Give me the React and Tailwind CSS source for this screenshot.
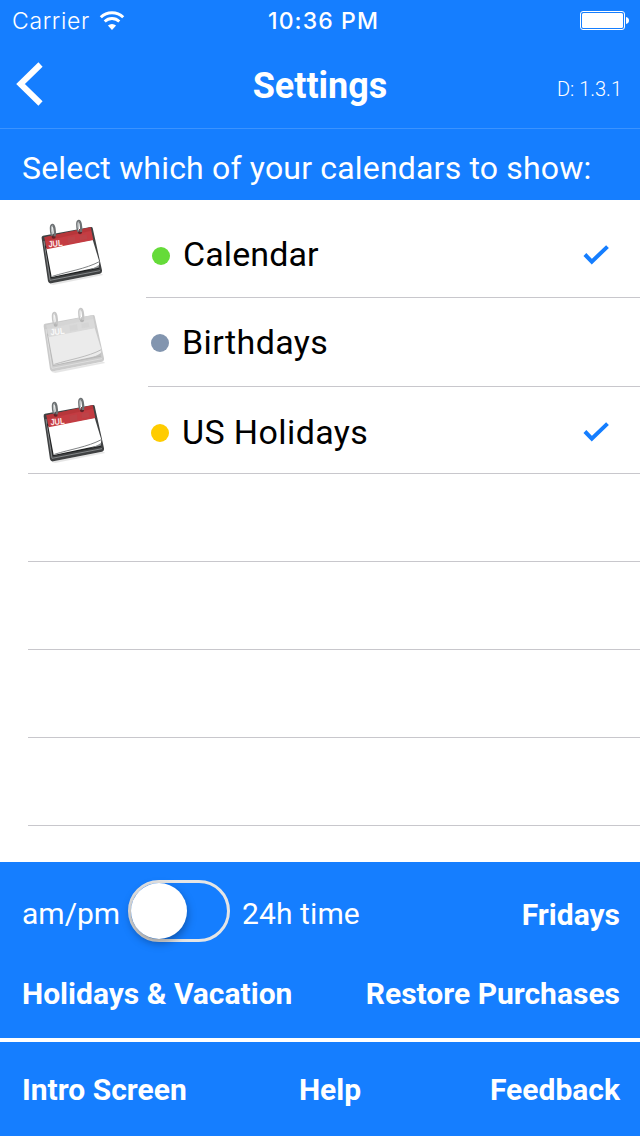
import React, { useState } from 'react';

const calendars = [
  { name: 'Calendar', color: '#65db39', shown: true, row: 'h-[98px] pl-[38px]', line: 'ml-[108px] border-b', icon: 'mt-[18px]', text: 'pt-[14px] pl-[46px]', label: 'pb-1 tracking-[0.1px]', check: 'mb-[2px]' },
  { name: 'Birthdays', color: '#8295af', shown: false, row: 'h-[89px] pl-[40px]', line: 'ml-[108px] border-b', icon: 'mt-[8px]', text: 'pt-[1px] pl-[43px]', label: 'pb-[2px] tracking-[0.4px]', check: 'mb-[2px]' },
  { name: 'US Holidays', color: '#ffcc00', shown: true, row: 'h-[87px] pl-[40px]', line: '', icon: 'mt-[9px]', text: 'pt-[5px] pl-[43px]', label: 'pb-[2px] tracking-[0.4px]', check: 'mb-[2px]' },
];

const WifiIcon = () => (
  <svg viewBox="0 0 26 20" className="ml-[9px] h-5 w-[26px]">
    <path d="M1.8 6.3a16 16 0 0 1 22.4 0" fill="none" stroke="#fff" strokeWidth="3" />
    <path d="M5.7 10.5a10.4 10.4 0 0 1 14.6 0" fill="none" stroke="#fff" strokeWidth="2.8" />
    <path d="M13 19l-4.1-4.4a6 6 0 0 1 8.2 0z" fill="#fff" />
  </svg>
);

const BatteryIcon = () => (
  <svg viewBox="0 0 50 20" className="h-5 w-[50px]">
    <rect x="0.5" y="0.5" width="44" height="18" rx="2.5" fill="none" stroke="#fff" />
    <rect x="2" y="2" width="41" height="15" rx="1.5" fill="#fff" />
    <path d="M46 6c2 .3 3 1.700 3 3.500s-1 3.200-3 3.500z" fill="#fff" />
  </svg>
);

const CalendarIcon = ({ faded }) => {
  const frame = faded ? '#cbcbcb' : '#3f4142';
  const edge = faded ? '#dedede' : '#85888a';
  const inner = faded ? '#b9b9b9' : '#1f2122';
  const ring = faded ? '#c6c6c6' : '#6d7173';
  const ringShine = faded ? '#f0f0f0' : '#d9dddf';

  return (
    <svg viewBox="54 39 204 204" className="h-[68px] w-[68px] overflow-visible">
      <path d="M86 236l158-30 6 4-150 30z" fill="#000" opacity=".1" />
      <path d="M69 92L212 66q5-1 6 3l28 127q1 9-6 10L94 235q-8 1-10-6L65 100q-1-7 4-8z" fill={frame} />
      <path d="M72 108L90 226l150-29" fill="none" stroke={edge} strokeWidth="3" />
      <path d="M77 122L94 217l143-28" fill="none" stroke={inner} strokeWidth="4" />
      <path d="M79 130L218 104l20 66-2 16L95 216z" fill={faded ? '#ebebeb' : '#fff'} />
      <path d="M73 97L212 67l8 38L80 133z" fill={faded ? '#dadada' : '#c43c42'} />
      <path d="M73 97L212 67l2 10L76 108z" fill={faded ? '#d3d3d3' : '#b23338'} opacity=".7" />
      <path d="M142 98l23-4 2 17-23 4zM178 92l22-4 2 14-22 4z" fill={faded ? '#d2d2d2' : '#b9484d'} opacity=".6" />
      <path d="M97 214C148 198 196 192 238 170" fill="none" stroke={faded ? '#bcbcbc' : '#808385'} strokeWidth="3" />
      <path d="M193 197C210 193 226 188 238 179l-2 9-36 8z" fill={faded ? '#bfbfbf' : '#8d9092'} />
      <text
        x="86"
        y="127"
        transform="rotate(-6 86 127)"
        textLength="43"
        lengthAdjust="spacingAndGlyphs"
        fill={faded ? '#fafafa' : '#ffecec'}
        className="font-['Liberation_Sans'] text-[27px] font-bold"
      >
        JUL
      </text>
      <circle cx="101" cy="95" r="6" fill={faded ? '#b5b5b5' : '#632329'} />
      <circle cx="180" cy="82" r="6" fill={faded ? '#b5b5b5' : '#632329'} />
      <path d="M96 92C91 72 92 61 97 60s9 14 7 34M175 80c-5-20-4-31 1-32s9 14 7 33" fill="none" stroke={ring} strokeWidth="7" />
      <path d="M97 88c-3-16-3-23 0-26M176 76c-3-16-3-23 0-26" fill="none" stroke={ringShine} strokeWidth="3" />
    </svg>
  );
};

const CheckIcon = ({ className }) => (
  <svg viewBox="0 0 28 22" className={`mr-[30px] h-[22px] w-7 ${className}`}>
    <path d="M2.900 10.500l6.900 7.100L25.500 2.600" fill="none" stroke="#157eff" strokeWidth="4" />
  </svg>
);

const CalendarRow = ({ calendar, onToggle }) => (
  <button type="button" onClick={onToggle} className={`flex w-full text-left ${calendar.row}`}>
    <span className={`-mr-[68px] shrink-0 ${calendar.icon}`}>
      <CalendarIcon faded={!calendar.shown} />
    </span>
    <span className={`flex flex-1 items-center border-[#c8c7cc] ${calendar.line}`}>
      <span className={`flex flex-1 items-center ${calendar.line ? '-ml-[40px]' : 'ml-[68px]'} ${calendar.text}`}>
        <span className="h-[18px] w-[18px] shrink-0 rounded-full" style={{ backgroundColor: calendar.color }} />
        <span className={`ml-[13px] flex-1 text-[34px] leading-10 text-black ${calendar.label}`}>{calendar.name}</span>
        {calendar.shown ? <CheckIcon className={calendar.check} /> : null}
      </span>
    </span>
  </button>
);

const App = () => {
  const [items, setItems] = useState(calendars);
  const [is24h, setIs24h] = useState(false);

  const toggle = (name) => {
    setItems(items.map((item) => (item.name === name ? { ...item, shown: !item.shown } : item)));
  };

  return (
    <div className="flex h-[1136px] w-[640px] flex-col overflow-hidden bg-white font-[Roboto,sans-serif] text-white">
      <header className="h-[129px] border-b border-[#3b93ff] bg-[#157eff]">
        <div className="grid h-10 grid-cols-3 items-center pt-[2px] pr-[10px] pl-3 font-[Inter,sans-serif] text-[23px]">
          <div className="flex items-center">
            <span className="font-light tracking-[0.65px]">Carrier</span>
            <WifiIcon />
          </div>
          <span className="pl-[5px] text-center font-medium tracking-[1.1px] whitespace-nowrap">10:36 PM</span>
          <div className="flex justify-end"><BatteryIcon /></div>
        </div>
        <div className="grid h-[88px] grid-cols-3 items-center pr-[18px] pl-4">
          <button type="button" aria-label="Back">
            <svg viewBox="0 0 28 44" className="h-11 w-7">
              <path d="M24.500 2.500L4.500 22l20 19.500" fill="none" stroke="#fff" strokeWidth="6" />
            </svg>
          </button>
          <h1 className="pt-1 pl-[2px] text-center text-[36px] font-bold">Settings</h1>
          <span className="pt-[9px] text-right text-[20px] font-light">D: 1.3.1</span>
        </div>
      </header>

      <div className="h-[71px] bg-[#157eff] pt-[19px] pl-[22px] text-[32px] leading-10 tracking-[0.18px] whitespace-nowrap">
        Select which of your calendars to show:
      </div>

      <main className="h-[662px]">
        {items.map((calendar) => (
          <CalendarRow key={calendar.name} calendar={calendar} onToggle={() => toggle(calendar.name)} />
        ))}
        <div className="-mt-px ml-7 h-px bg-[#c8c7cc]" />
        {[1, 2, 3, 4].map((row) => (
          <div key={row} className="ml-7 h-[88px] border-b border-[#c8c7cc]" />
        ))}
      </main>

      <section className="h-[176px] bg-[#157eff] pr-5 pl-[22px] text-[30px]">
        <div className="flex h-[98px] items-center">
          <span className="w-[106px] pt-1">am/pm</span>
          <button
            type="button"
            role="switch"
            aria-checked={is24h}
            aria-label="24h time"
            onClick={() => setIs24h(!is24h)}
            className={`flex h-[62px] w-[102px] items-center rounded-full border-[3px] border-[#e5e5e5] ${is24h ? 'justify-end' : ''}`}
          >
            <span className="h-14 w-14 rounded-full bg-white shadow-[0_4px_10px_rgba(0,0,0,0.35)]" />
          </button>
          <span className="ml-3 pt-1 tracking-[0.1px]">24h time</span>
          <span className="ml-auto pt-[7px] font-bold">Fridays</span>
        </div>
        <div className="flex h-[66px] items-center justify-between font-bold">
          <span>Holidays &amp; Vacation</span>
          <span>Restore Purchases</span>
        </div>
      </section>

      <footer className="mt-1 grid h-[94px] grid-cols-3 items-center bg-[#157eff] pr-5 pl-[22px] text-[30px] font-bold">
        <span>Intro Screen</span>
        <span className="pl-[18px] text-center">Help</span>
        <span className="text-right">Feedback</span>
      </footer>
    </div>
  );
};

export default App;
